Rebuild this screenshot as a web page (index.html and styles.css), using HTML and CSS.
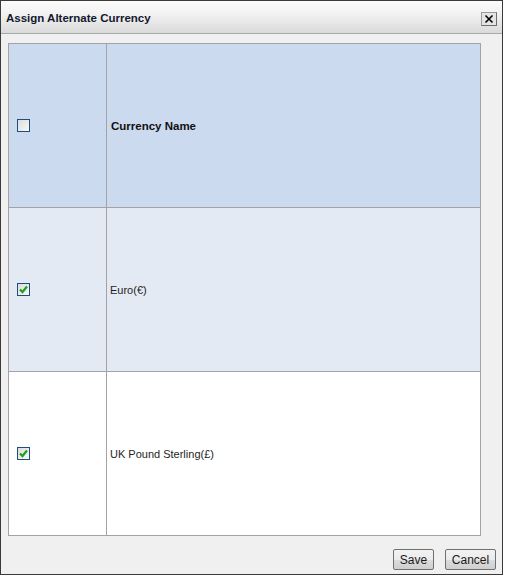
FILE: index.html
```html
<!DOCTYPE html>
<html>
<head>
<meta charset="utf-8">
<link rel="stylesheet" href="styles.css">
</head>
<body>
<div class="dialog">
  <div class="titlebar">
    <span class="title">Assign Alternate Currency</span>
    <span class="close"><svg width="10" height="10" viewBox="0 0 10 10"><path d="M1.5 1.5 L8.5 8.5 M8.5 1.5 L1.5 8.5" stroke="#000" stroke-width="1.6" fill="none"/></svg></span>
  </div>
  <div class="content">
    <table class="grid">
      <tr class="head">
        <td class="c1"><span class="cb"></span></td>
        <td class="c2">Currency Name</td>
      </tr>
      <tr class="alt">
        <td class="c1"><span class="cb"><svg width="11" height="11" viewBox="0 0 11 11"><path d="M2 5.5 L4.5 8 L9 2.5" stroke="#1fa01f" stroke-width="2.2" fill="none"/></svg></span></td>
        <td class="c2">Euro(€)</td>
      </tr>
      <tr class="plain">
        <td class="c1"><span class="cb"><svg width="11" height="11" viewBox="0 0 11 11"><path d="M2 5.5 L4.5 8 L9 2.5" stroke="#1fa01f" stroke-width="2.2" fill="none"/></svg></span></td>
        <td class="c2">UK Pound Sterling(£)</td>
      </tr>
    </table>
    <div class="footer">
      <button class="btn save">Save</button>
      <button class="btn cancel">Cancel</button>
    </div>
  </div>
</div>
</body>
</html>
```
FILE: styles.css
```css
html, body {
  margin: 0;
  padding: 0;
  background: #ffffff;
}
body {
  font-family: "Liberation Sans", Arial, sans-serif;
}
.dialog {
  width: 503px;
  height: 575px;
  box-sizing: border-box;
  border: 1px solid #3a3a3a;
  background: #f0f0f0;
  display: flex;
  flex-direction: column;
}
.titlebar {
  height: 32px;
  border-bottom: 1px solid #a8a8a8;
  background: linear-gradient(#fbfbfb, #f2f2f2 40%, #dadada);
  display: flex;
  align-items: center;
  justify-content: space-between;
  padding: 0 5px 0 5px;
}
.title {
  font-weight: bold;
  font-size: 11.5px;
  color: #14182e;
  margin-top: 1px;
}
.close {
  width: 14px;
  height: 12px;
  border: 1px solid #9a9a9a;
  border-right-color: #6e6e6e;
  border-bottom-color: #6e6e6e;
  background: #e4e4e4;
  display: flex;
  align-items: center;
  justify-content: center;
  margin-top: 3px;
}
.content {
  flex: 1;
  padding: 9px 0 0 7px;
  display: flex;
  flex-direction: column;
}
.grid {
  border-collapse: collapse;
  width: 473px;
  font-size: 11px;
  color: #1e1e1e;
}
.grid td {
  border: 1px solid #a3a3a3;
  height: 164px;
  padding: 0;
  vertical-align: middle;
  box-sizing: border-box;
}
.grid .c1 {
  width: 98px;
  padding-left: 8px;
}
.grid .c2 {
  padding-left: 3px;
}
.head td {
  background: #cbdaee;
}
.head .c2 {
  font-weight: bold;
  font-size: 11.5px;
  color: #111;
  padding-left: 4px;
}
.alt td {
  background: #e4eaf3;
}
.plain td {
  background: #ffffff;
}
.cb {
  display: flex;
  align-items: center;
  justify-content: center;
  width: 13px;
  height: 13px;
  box-sizing: border-box;
  border: 1px solid #1d4e7d;
  background: linear-gradient(135deg, #dcdcdc, #f8f8f8);
}
.footer {
  display: flex;
  justify-content: flex-end;
  gap: 11px;
  padding: 13px 6px 0 0;
  width: 488px;
}
.btn {
  height: 21px;
  box-sizing: border-box;
  border: 1px solid #707070;
  border-radius: 2px;
  background: linear-gradient(#f2f2f2, #ebebeb 50%, #dddddd 51%, #cfcfcf);
  font-family: "Liberation Sans", Arial, sans-serif;
  font-size: 12px;
  color: #1a1a1a;
  padding: 0;
}
.save { width: 41px; }
.cancel { width: 51px; }
```
